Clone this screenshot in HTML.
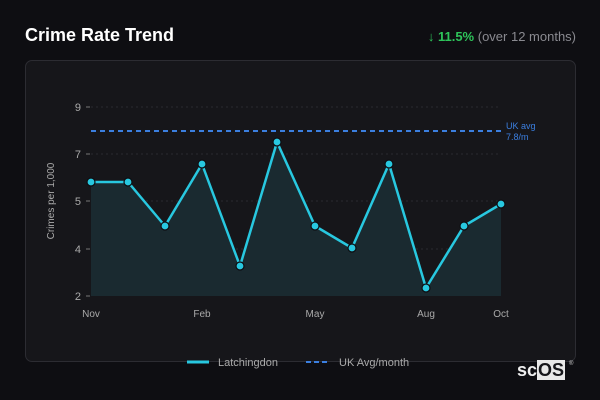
<!DOCTYPE html>
<html><head><style>
body{margin:0;width:600px;height:400px;background:#0e0e12;font-family:"Liberation Sans","DejaVu Sans",sans-serif;overflow:hidden;position:relative}
.t{position:absolute;left:25px;top:25px;color:#fff;font-weight:bold;font-size:18px}
.ch{position:absolute;right:24px;top:29px;font-size:13px;color:#8a8a90}
.ch b{color:#2ec45a}
.card{position:absolute;left:25px;top:60px;width:549px;height:300px;border:1px solid #2c2c32;border-radius:7px;background:#16161a}
.logo{position:absolute;left:517px;top:360px;font-size:18px;color:#eee;font-weight:bold;letter-spacing:0}
.logo span{background:#e8e8e8;color:#16161a;padding:0 1px}
</style></head><body>
<div class="t">Crime Rate Trend</div>
<div class="ch"><b>↓ 11.5%</b> (over 12 months)</div>
<div class="card"></div>
<svg width="600" height="400" style="position:absolute;left:0;top:0" font-family="Liberation Sans, DejaVu Sans, sans-serif">
<g stroke="#2a2a30" stroke-dasharray="2,3" stroke-width="1">
<line x1="91" x2="501" y1="107" y2="107"/><line x1="91" x2="501" y1="154" y2="154"/><line x1="91" x2="501" y1="201" y2="201"/><line x1="91" x2="501" y1="249" y2="249"/>
</g>
<g stroke="#777" stroke-width="1"><line x1="86" x2="90" y1="107" y2="107"/><line x1="86" x2="90" y1="154" y2="154"/><line x1="86" x2="90" y1="201" y2="201"/><line x1="86" x2="90" y1="249" y2="249"/><line x1="86" x2="90" y1="296" y2="296"/></g>
<g fill="#aaa" font-size="11" text-anchor="end"><text x="81" y="111">9</text><text x="81" y="158">7</text><text x="81" y="205">5</text><text x="81" y="253">4</text><text x="81" y="300">2</text></g>
<g fill="#aaa" font-size="10" text-anchor="middle"><text x="91" y="317">Nov</text><text x="202" y="317">Feb</text><text x="315" y="317">May</text><text x="426" y="317">Aug</text><text x="501" y="317">Oct</text></g>
<text transform="translate(54,201) rotate(-90)" fill="#aaa" font-size="10" text-anchor="middle">Crimes per 1,000</text>
<polygon fill="#1a2a30" points="91,296 91,182 128,182 165,226 202,164 240,266 277,142 315,226 352,248 389,164 426,288 464,226 501,204 501,296"/>
<line x1="91" x2="501" y1="131" y2="131" stroke="#3b7fe0" stroke-width="2" stroke-dasharray="5,4"/>
<text x="506" y="129" fill="#3b7fe0" font-size="9">UK avg</text><text x="506" y="140" fill="#3b7fe0" font-size="9">7.8/m</text>
<polyline fill="none" stroke="#28c8e0" stroke-width="2.5" stroke-linejoin="round" points="91,182 128,182 165,226 202,164 240,266 277,142 315,226 352,248 389,164 426,288 464,226 501,204"/>
<g fill="#28c8e0" stroke="#0e0e12" stroke-width="1.2">
<circle cx="91" cy="182" r="4"/><circle cx="128" cy="182" r="4"/><circle cx="165" cy="226" r="4"/><circle cx="202" cy="164" r="4"/><circle cx="240" cy="266" r="4"/><circle cx="277" cy="142" r="4"/><circle cx="315" cy="226" r="4"/><circle cx="352" cy="248" r="4"/><circle cx="389" cy="164" r="4"/><circle cx="426" cy="288" r="4"/><circle cx="464" cy="226" r="4"/><circle cx="501" cy="204" r="4"/>
</g>
<line x1="187" x2="209" y1="362" y2="362" stroke="#28c8e0" stroke-width="3"/>
<text x="218" y="366" fill="#aaa" font-size="11">Latchingdon</text>
<line x1="306" x2="330" y1="362" y2="362" stroke="#3b7fe0" stroke-width="2" stroke-dasharray="5,3"/>
<text x="339" y="366" fill="#aaa" font-size="11">UK Avg/month</text>
<text x="569" y="365" fill="#ccc" font-size="6">®</text>
</svg>
<div class="logo">sc<span>OS</span></div>
</body></html>
